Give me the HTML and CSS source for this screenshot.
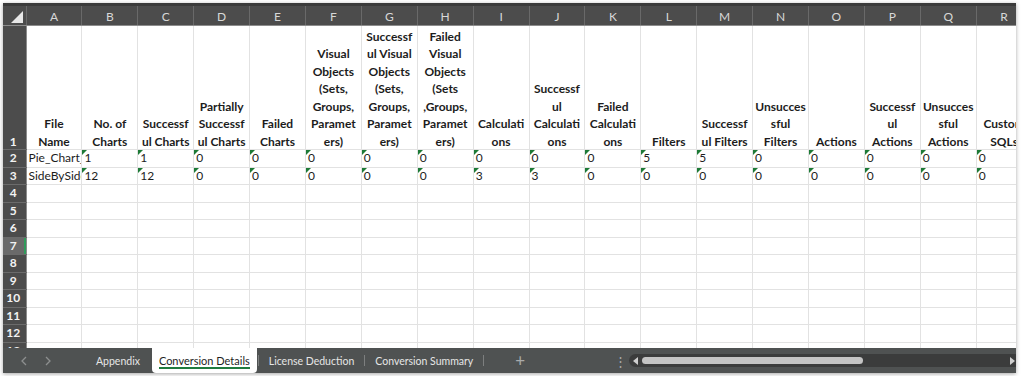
FILE: index.html
```html
<!DOCTYPE html>
<html lang="en">
<head>
    <meta charset="UTF-8">
    <title>Conversion Details</title>
    <link rel="stylesheet" href="styles.css">
</head>
<body>
    <div class="sheet">
        <div class="grid">
            <table>
                <colgroup>
                    <col class="c-rh">
                    <col span="18" class="c-col">
                </colgroup>
                <tr class="letters">
                    <th class="corner"><svg width="12" height="12" viewBox="0 0 12 12"><polygon points="12,0 12,12 0,12" fill="#e8e8e8"/></svg></th>
                    <th>A</th><th>B</th><th>C</th><th>D</th><th>E</th><th>F</th><th>G</th><th>H</th><th>I</th>
                    <th>J</th><th>K</th><th>L</th><th>M</th><th>N</th><th>O</th><th>P</th><th>Q</th><th>R</th>
                </tr>
                <tr class="r-head">
                    <th class="rn"><div class="in">1</div></th>
                    <td class="hd"><div class="in">File<br>Name</div></td>
                    <td class="hd"><div class="in">No. of<br>Charts</div></td>
                    <td class="hd"><div class="in">Successf<br>ul Charts</div></td>
                    <td class="hd"><div class="in">Partially<br>Successf<br>ul Charts</div></td>
                    <td class="hd"><div class="in">Failed<br>Charts</div></td>
                    <td class="hd"><div class="in">Visual<br>Objects<br>(Sets,<br>Groups,<br>Paramet<br>ers)</div></td>
                    <td class="hd"><div class="in">Successf<br>ul Visual<br>Objects<br>(Sets,<br>Groups,<br>Paramet<br>ers)</div></td>
                    <td class="hd"><div class="in">Failed<br>Visual<br>Objects<br>(Sets<br>,Groups,<br>Paramet<br>ers)</div></td>
                    <td class="hd"><div class="in">Calculati<br>ons</div></td>
                    <td class="hd"><div class="in">Successf<br>ul<br>Calculati<br>ons</div></td>
                    <td class="hd"><div class="in">Failed<br>Calculati<br>ons</div></td>
                    <td class="hd"><div class="in">Filters</div></td>
                    <td class="hd"><div class="in">Successf<br>ul Filters</div></td>
                    <td class="hd"><div class="in">Unsucces<br>sful<br>Filters</div></td>
                    <td class="hd"><div class="in">Actions</div></td>
                    <td class="hd"><div class="in">Successf<br>ul<br>Actions</div></td>
                    <td class="hd"><div class="in">Unsucces<br>sful<br>Actions</div></td>
                    <td class="hd"><div class="in">Custom<br>SQLs</div></td>
                </tr>
                <tr>
                    <th class="rn">2</th>
                    <td>Pie_Chart_Sample</td>
                    <td class="n">1</td><td class="n">1</td><td class="n">0</td><td class="n">0</td><td class="n">0</td><td class="n">0</td>
                    <td class="n">0</td><td class="n">0</td><td class="n">0</td><td class="n">0</td><td class="n">5</td><td class="n">5</td>
                    <td class="n">0</td><td class="n">0</td><td class="n">0</td><td class="n">0</td><td class="n">0</td>
                </tr>
                <tr>
                    <th class="rn">3</th>
                    <td>SideBySideBars</td>
                    <td class="n">12</td><td class="n">12</td><td class="n">0</td><td class="n">0</td><td class="n">0</td><td class="n">0</td>
                    <td class="n">0</td><td class="n">3</td><td class="n">3</td><td class="n">0</td><td class="n">0</td><td class="n">0</td>
                    <td class="n">0</td><td class="n">0</td><td class="n">0</td><td class="n">0</td><td class="n">0</td>
                </tr>
                <tr><th class="rn">4</th><td></td><td></td><td></td><td></td><td></td><td></td><td></td><td></td><td></td><td></td><td></td><td></td><td></td><td></td><td></td><td></td><td></td><td></td></tr>
                <tr><th class="rn">5</th><td></td><td></td><td></td><td></td><td></td><td></td><td></td><td></td><td></td><td></td><td></td><td></td><td></td><td></td><td></td><td></td><td></td><td></td></tr>
                <tr><th class="rn">6</th><td></td><td></td><td></td><td></td><td></td><td></td><td></td><td></td><td></td><td></td><td></td><td></td><td></td><td></td><td></td><td></td><td></td><td></td></tr>
                <tr><th class="rn sel">7</th><td></td><td></td><td></td><td></td><td></td><td></td><td></td><td></td><td></td><td></td><td></td><td></td><td></td><td></td><td></td><td></td><td></td><td></td></tr>
                <tr><th class="rn">8</th><td></td><td></td><td></td><td></td><td></td><td></td><td></td><td></td><td></td><td></td><td></td><td></td><td></td><td></td><td></td><td></td><td></td><td></td></tr>
                <tr><th class="rn">9</th><td></td><td></td><td></td><td></td><td></td><td></td><td></td><td></td><td></td><td></td><td></td><td></td><td></td><td></td><td></td><td></td><td></td><td></td></tr>
                <tr><th class="rn">10</th><td></td><td></td><td></td><td></td><td></td><td></td><td></td><td></td><td></td><td></td><td></td><td></td><td></td><td></td><td></td><td></td><td></td><td></td></tr>
                <tr><th class="rn">11</th><td></td><td></td><td></td><td></td><td></td><td></td><td></td><td></td><td></td><td></td><td></td><td></td><td></td><td></td><td></td><td></td><td></td><td></td></tr>
                <tr><th class="rn">12</th><td></td><td></td><td></td><td></td><td></td><td></td><td></td><td></td><td></td><td></td><td></td><td></td><td></td><td></td><td></td><td></td><td></td><td></td></tr>
                <tr><th class="rn">13</th><td></td><td></td><td></td><td></td><td></td><td></td><td></td><td></td><td></td><td></td><td></td><td></td><td></td><td></td><td></td><td></td><td></td><td></td></tr>
            </table>
        </div>

        <div class="tabs">
            <div class="nav">
                <svg width="6" height="10" viewBox="0 0 6 10"><path d="M5 1 L1 5 L5 9" fill="none" stroke="#8d8f8f" stroke-width="1.3"/></svg>
                <svg width="6" height="10" viewBox="0 0 6 10"><path d="M1 1 L5 5 L1 9" fill="none" stroke="#8d8f8f" stroke-width="1.3"/></svg>
            </div>
            <div class="tab">Appendix</div>
            <div class="tab active">Conversion Details</div>
            <div class="sep"></div>
            <div class="tab">License Deduction</div>
            <div class="sep"></div>
            <div class="tab">Conversion Summary</div>
            <div class="sep"></div>
            <div class="add">+</div>
            <div class="more">&#8942;</div>
            <div class="scroll">
                <span class="arrow left"></span>
                <span class="thumb"></span>
                <span class="arrow right"></span>
            </div>
        </div>
    </div>
</body>
</html>
```

FILE: styles.css
```css
body { margin: 0; padding: 3px; background: #fff; font-family: Lato, "Liberation Sans", sans-serif; }
.sheet { width: 1013px; height: 370px; display: flex; flex-direction: column; overflow: hidden; box-shadow: 0 1px 4px rgba(0,0,0,0.35); background: #fff; }
.grid { flex: 1; overflow: hidden; }

table { border-collapse: collapse; table-layout: fixed; width: 1029px; }
.c-rh { width: 23px; }
.c-col { width: 55.9px; }

td { border: 1px solid #e2e2e2; border-top: none; border-left: none; height: 16.5px; padding: 0 0 0 2px; font-size: 12px; color: #1c1c1c; white-space: nowrap; overflow: hidden; vertical-align: middle; line-height: 16px; }
td.n { position: relative; }
td.n::before { content: ""; position: absolute; top: 0; left: 0; border-top: 5px solid #1d7a36; border-right: 5px solid transparent; }

.letters th { height: 16px; background: #4c4c4c; color: #d8d8d8; font-weight: normal; font-size: 12px; border-top: 3px solid #3b3b3b; border-right: 1px solid #696969; border-bottom: 1px solid #8c8c8c; padding: 3px 0 0; line-height: 16px; }
.letters th.corner { text-align: right; vertical-align: bottom; padding: 0 3px 2px 0; line-height: 0; }

.r-head td.hd { height: 123px; font-weight: bold; text-align: center; vertical-align: bottom; line-height: 17.5px; padding: 0; color: #1c1c1c; }
.in { margin-bottom: -1px; }

th.rn { background: #4c4c4c; color: #f2f2f2; font-size: 12px; font-weight: bold; border-bottom: 1px solid #6b6b6b; border-right: 1px solid #8c8c8c; padding: 0 2px 0 0; text-align: center; line-height: 16px; height: 16.5px; }
.r-head th.rn { vertical-align: bottom; line-height: 17.5px; }
th.rn.sel { background: #6a6a6a; box-shadow: inset -2px 0 0 #2f9a5a; }

.tabs { flex: none; height: 25px; background: #4f5252; display: flex; align-items: center; font-size: 10.5px; color: #e6e6e6; }
.nav { width: 63px; padding-left: 18px; display: flex; align-items: center; gap: 18px; }
.tab { height: 100%; padding: 0 12px; display: flex; align-items: center; white-space: nowrap; }
.tab.active { padding: 0 7px; font-size: 11px; background: #fff; color: #1f1f1f; border-radius: 0 0 4px 4px; position: relative; }
.tab.active::after { content: ""; position: absolute; left: 7px; right: 7px; bottom: 4px; height: 2px; background: #1f7a3e; }
.tab.active + .sep { margin-left: 1px; }
.sep + .tab { padding: 0 10px; }
.sep { width: 1px; height: 11px; background: #7d7f7f; }
.add { margin-left: 28px; width: 16px; text-align: center; font-size: 17px; color: #a9abab; }
.more { margin-left: 86px; width: 8px; text-align: center; font-size: 13px; color: #a9abab; }
.scroll { flex: 1; margin-left: 7px; height: 13px; background: #3b3c3c; border-radius: 7px 0 0 7px; display: flex; align-items: center; }
.arrow { width: 0; height: 0; border-top: 4px solid transparent; border-bottom: 4px solid transparent; }
.arrow.left { margin-left: 4px; border-right: 5px solid #cfcfcf; }
.arrow.right { margin-left: auto; margin-right: 1px; border-left: 5px solid #cfcfcf; }
.thumb { margin-left: 4px; width: 221px; height: 7px; border-radius: 4px; background: #c4c4c4; }
```
